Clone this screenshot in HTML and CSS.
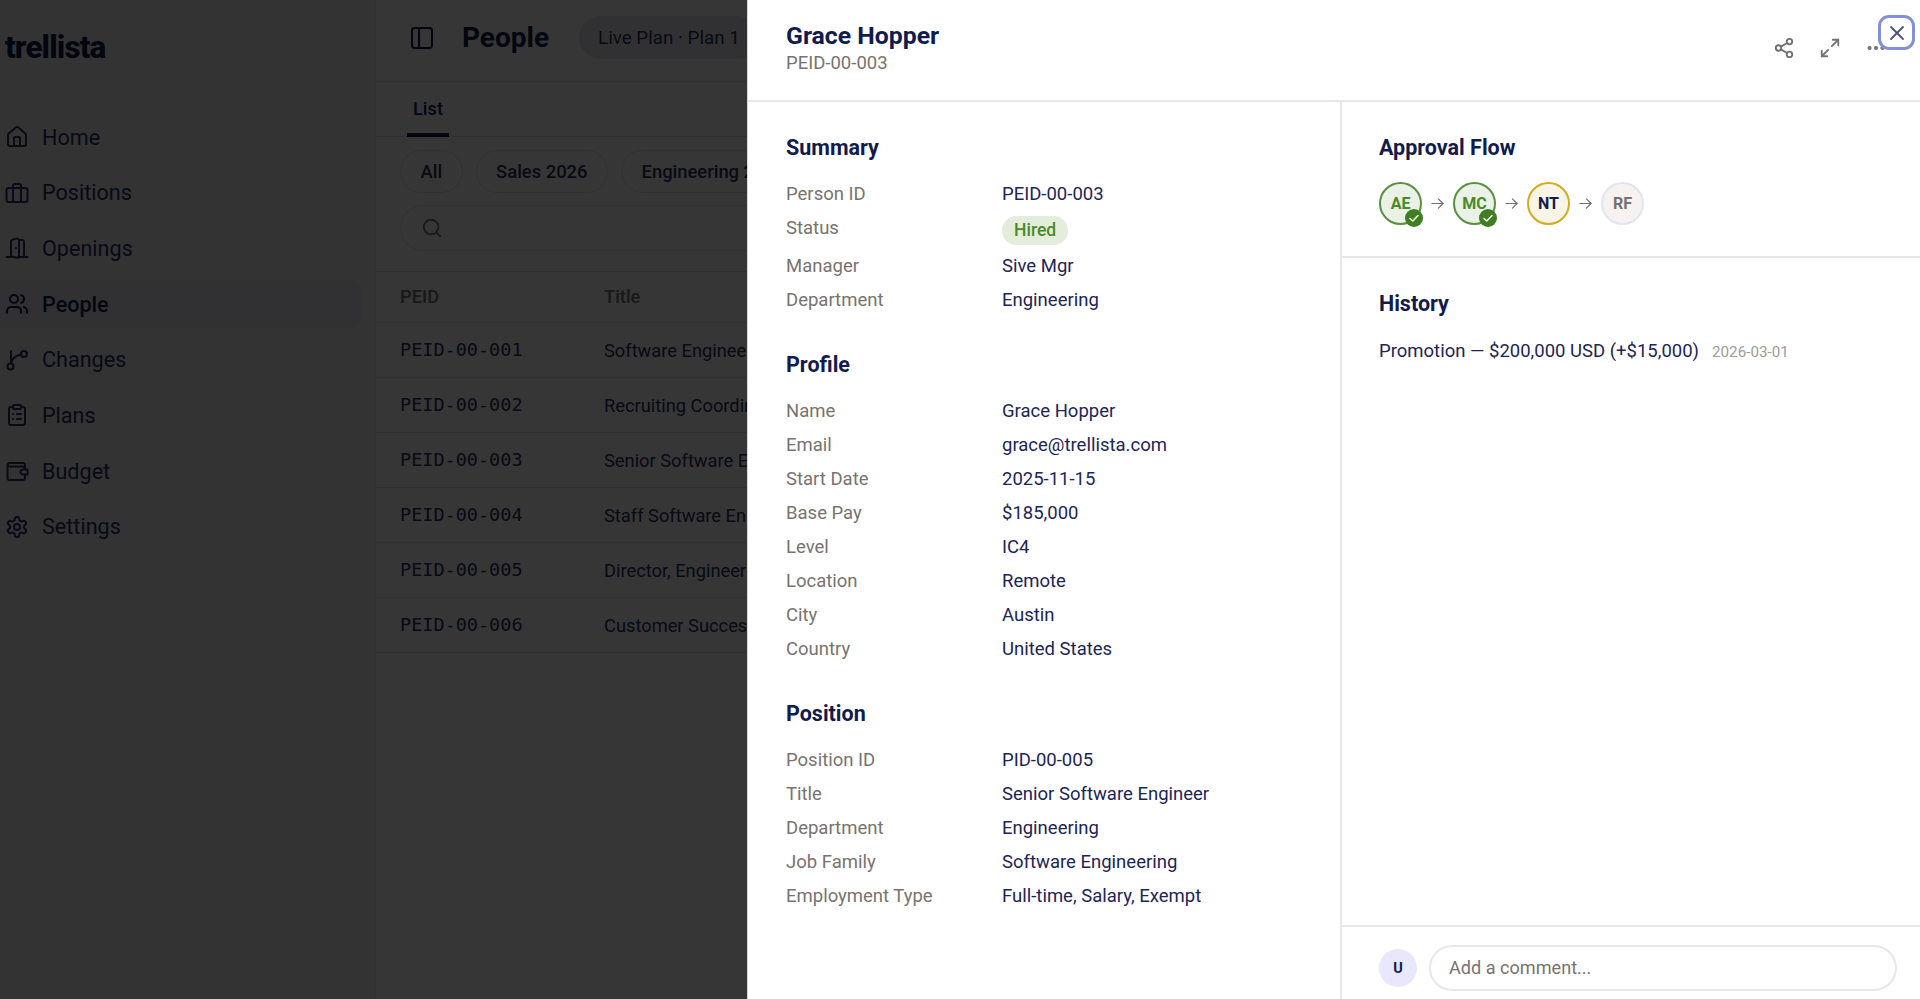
FILE: index.html
```html
<!DOCTYPE html>
<html lang="en">

<head>
    <meta charset="UTF-8">
    <meta name="viewport" content="width=device-width, initial-scale=1.0">
    <title>People</title>
    <link rel="stylesheet" href="styles.css">
</head>

<body>
    <div class="app">
        <aside class="sidebar">
            <div class="logo">trellista</div>
            <nav class="nav">
                <a class="nav-item">
                    <svg class="icon" viewBox="0 0 24 24"><path d="M15 21v-8a1 1 0 0 0-1-1h-4a1 1 0 0 0-1 1v8"/><path d="M3 10a2 2 0 0 1 .7-1.5l7-6a2 2 0 0 1 2.6 0l7 6a2 2 0 0 1 .7 1.5v9a2 2 0 0 1-2 2H5a2 2 0 0 1-2-2z"/></svg>
                    Home
                </a>
                <a class="nav-item">
                    <svg class="icon" viewBox="0 0 24 24"><path d="M16 21V5a2 2 0 0 0-2-2h-4a2 2 0 0 0-2 2v16"/><rect x="1.5" y="7" width="21" height="14" rx="2"/></svg>
                    Positions
                </a>
                <a class="nav-item">
                    <svg class="icon" viewBox="0 0 24 24"><path d="M14 4h3a2 2 0 0 1 2 2v14"/><path d="M1.5 21h4"/><path d="M14 21h8.5"/><path d="M11 12v.01"/><path d="M14 4.5v16.2a1 1 0 0 1-1.2 1L6 20.5V5.500a2 2 0 0 1 1.500-1.900l4-1A2 2 0 0 1 14 4.500Z"/></svg>
                    Openings
                </a>
                <a class="nav-item active">
                    <svg class="icon" viewBox="0 0 24 24"><path d="M16 21v-2a4 4 0 0 0-4-4H6a4 4 0 0 0-4 4v2"/><circle cx="9" cy="7" r="4"/><path d="M22 21v-2a4 4 0 0 0-3-3.87"/><path d="M16 3.13a4 4 0 0 1 0 7.75"/></svg>
                    People
                </a>
                <a class="nav-item">
                    <svg class="icon" viewBox="0 0 24 24"><path d="M6 15V3"/><circle cx="5.5" cy="18.5" r="3"/><circle cx="19" cy="6" r="3"/><path d="M6.5 14c1-3.5 4.5-6.5 9.5-7.5"/></svg>
                    Changes
                </a>
                <a class="nav-item">
                    <svg class="icon" viewBox="0 0 24 24"><rect x="8" y="2" width="8" height="4" rx="1"/><path d="M16 4h2a2 2 0 0 1 2 2v14a2 2 0 0 1-2 2H6a2 2 0 0 1-2-2V6a2 2 0 0 1 2-2h2"/><path d="M12 11h4"/><path d="M12 16h4"/><path d="M8 11h.01"/><path d="M8 16h.01"/></svg>
                    Plans
                </a>
                <a class="nav-item">
                    <svg class="icon" viewBox="0 0 24 24"><path d="M20 10V6a2 2 0 0 0-2-2H4.5a2 2 0 0 0-2 2v13a2 2 0 0 0 2 2H18a2 2 0 0 0 2-2v-3"/><path d="M2.5 6a2 2 0 0 0 2 1.5h13a2.5 2.5 0 0 1 2.5 2.5"/><path d="M22.5 10.5v5H18a2.500 2.500 0 0 1 0-5z"/></svg>
                    Budget
                </a>
                <a class="nav-item">
                    <svg class="icon" viewBox="0 0 24 24"><path d="M12.22 2h-.44a2 2 0 0 0-2 2v.18a2 2 0 0 1-1 1.73l-.43.25a2 2 0 0 1-2 0l-.15-.08a2 2 0 0 0-2.73.73l-.22.38a2 2 0 0 0 .73 2.73l.15.1a2 2 0 0 1 1 1.72v.51a2 2 0 0 1-1 1.74l-.15.09a2 2 0 0 0-.73 2.73l.22.38a2 2 0 0 0 2.73.73l.15-.08a2 2 0 0 1 2 0l.43.25a2 2 0 0 1 1 1.73V20a2 2 0 0 0 2 2h.44a2 2 0 0 0 2-2v-.18a2 2 0 0 1 1-1.73l.43-.25a2 2 0 0 1 2 0l.15.08a2 2 0 0 0 2.73-.73l.22-.39a2 2 0 0 0-.73-2.73l-.15-.08a2 2 0 0 1-1-1.74v-.5a2 2 0 0 1 1-1.74l.15-.09a2 2 0 0 0 .73-2.73l-.22-.38a2 2 0 0 0-2.73-.73l-.15.08a2 2 0 0 1-2 0l-.43-.25a2 2 0 0 1-1-1.73V4a2 2 0 0 0-2-2z"/><circle cx="12" cy="12" r="3"/></svg>
                    Settings
                </a>
            </nav>
        </aside>

        <main class="main">
            <header class="main-head">
                <svg class="icon" viewBox="0 0 24 24"><rect x="2" y="2" width="20" height="20" rx="2.5"/><path d="M9 2v20"/></svg>
                <h1 class="page-title">People</h1>
                <span class="plan-pill">Live Plan · Plan 1</span>
            </header>
            <div class="tabs">
                <span class="tab">List</span>
            </div>
            <div class="chips">
                <span class="chip">All</span>
                <span class="chip">Sales 2026</span>
                <span class="chip">Engineering 2</span>
            </div>
            <div class="search">
                <svg class="search-icon" viewBox="0 0 24 24"><circle cx="11" cy="11" r="8"/><path d="m21 21-4.3-4.3"/></svg>
            </div>
            <div class="table">
                <div class="tr th"><span class="col-id">PEID</span><span>Title</span></div>
                <div class="tr"><span class="col-id mono">PEID-00-001</span><span>Software Engineer</span></div>
                <div class="tr"><span class="col-id mono">PEID-00-002</span><span>Recruiting Coordin</span></div>
                <div class="tr"><span class="col-id mono">PEID-00-003</span><span>Senior Software En</span></div>
                <div class="tr"><span class="col-id mono">PEID-00-004</span><span>Staff Software Eng</span></div>
                <div class="tr"><span class="col-id mono">PEID-00-005</span><span>Director, Engineer</span></div>
                <div class="tr"><span class="col-id mono">PEID-00-006</span><span>Customer Success</span></div>
            </div>
        </main>
    </div>

    <div class="overlay"></div>

    <section class="drawer">
        <header class="drawer-head">
            <div>
                <h2 class="person-name">Grace Hopper</h2>
                <div class="person-id">PEID-00-003</div>
            </div>
            <div class="drawer-actions">
                <svg class="action" viewBox="0 0 24 24"><circle cx="18" cy="5" r="3"/><circle cx="6" cy="12" r="3"/><circle cx="18" cy="19" r="3"/><path d="M8.6 13.5l6.8 4"/><path d="M15.4 6.5l-6.8 4"/></svg>
                <svg class="action" viewBox="0 0 24 24"><path d="M14 10l7-7"/><path d="M15 3h6v6"/><path d="M10 14l-7 7"/><path d="M3 15v6h6"/></svg>
                <svg class="action" viewBox="0 0 24 24"><circle cx="5" cy="12" r="1.3"/><circle cx="12" cy="12" r="1.3"/><circle cx="19" cy="12" r="1.3"/></svg>
            </div>
            <button class="close-btn">
                <svg viewBox="0 0 24 24"><path d="M18 6 6 18"/><path d="m6 6 12 12"/></svg>
            </button>
        </header>

        <div class="drawer-body">
            <div class="details">
                <h3 class="section-title">Summary</h3>
                <dl class="fields">
                    <dt>Person ID</dt><dd>PEID-00-003</dd>
                    <dt>Status</dt><dd><span class="badge">Hired</span></dd>
                    <dt>Manager</dt><dd>Sive Mgr</dd>
                    <dt>Department</dt><dd>Engineering</dd>
                </dl>
                <h3 class="section-title">Profile</h3>
                <dl class="fields">
                    <dt>Name</dt><dd>Grace Hopper</dd>
                    <dt>Email</dt><dd>grace@trellista.com</dd>
                    <dt>Start Date</dt><dd>2025-11-15</dd>
                    <dt>Base Pay</dt><dd>$185,000</dd>
                    <dt>Level</dt><dd>IC4</dd>
                    <dt>Location</dt><dd>Remote</dd>
                    <dt>City</dt><dd>Austin</dd>
                    <dt>Country</dt><dd>United States</dd>
                </dl>
                <h3 class="section-title">Position</h3>
                <dl class="fields">
                    <dt>Position ID</dt><dd>PID-00-005</dd>
                    <dt>Title</dt><dd>Senior Software Engineer</dd>
                    <dt>Department</dt><dd>Engineering</dd>
                    <dt>Job Family</dt><dd>Software Engineering</dd>
                    <dt>Employment Type</dt><dd>Full-time, Salary, Exempt</dd>
                </dl>
            </div>

            <div class="side">
                <div class="approval">
                    <h3 class="section-title">Approval Flow</h3>
                    <div class="flow">
                        <span class="step done">AE<svg class="tick" viewBox="0 0 18 18"><path d="M5 9.5l2.8 2.5L13 6.5"/></svg></span>
                        <svg class="arrow" viewBox="0 0 14 14"><path d="M1 7h12"/><path d="M8 2l5 5-5 5"/></svg>
                        <span class="step done">MC<svg class="tick" viewBox="0 0 18 18"><path d="M5 9.5l2.8 2.5L13 6.5"/></svg></span>
                        <svg class="arrow" viewBox="0 0 14 14"><path d="M1 7h12"/><path d="M8 2l5 5-5 5"/></svg>
                        <span class="step current">NT</span>
                        <svg class="arrow" viewBox="0 0 14 14"><path d="M1 7h12"/><path d="M8 2l5 5-5 5"/></svg>
                        <span class="step waiting">RF</span>
                    </div>
                </div>
                <div class="history">
                    <h3 class="section-title">History</h3>
                    <div class="history-row">Promotion — $200,000 USD (+$15,000)<span class="history-date">2026-03-01</span></div>
                </div>
                <div class="comment-bar">
                    <span class="avatar">U</span>
                    <div class="comment-input">Add a comment...</div>
                </div>
            </div>
        </div>
    </section>
</body>

</html>
```

FILE: styles.css
```css
* {
    margin: 0;
    padding: 0;
    box-sizing: border-box;
}

html,
body {
    height: 100%;
    overflow: hidden;
}

body {
    font-family: Roboto, "Liberation Sans", sans-serif;
    color: #111b4d;
    background: #fff;
}

.app {
    display: flex;
    height: 100%;
}

svg {
    fill: none;
    stroke: currentColor;
    stroke-width: 2;
    stroke-linecap: round;
    stroke-linejoin: round;
    flex-shrink: 0;
}

.icon {
    width: 24px;
    height: 24px;
}

/* sidebar */
.sidebar {
    width: 376px;
    flex-shrink: 0;
    background: #eeeef6;
    border-right: 1px solid #e4e4ee;
}

.logo {
    padding: 30px 0 0 5px;
    height: 113px;
    font-size: 31.5px;
    line-height: 36px;
    font-weight: 800;
    letter-spacing: -0.9px;
    color: #111b4d;
}

.nav {
    display: flex;
    flex-direction: column;
    gap: 7.7px;
    padding-right: 13px;
}

.nav-item {
    display: flex;
    align-items: center;
    gap: 13px;
    height: 48px;
    padding-left: 5px;
    border-radius: 0 10px 10px 0;
    font-size: 21.6px;
    color: #2a3060;
}

.nav-item.active {
    background: #e5e5f2;
    color: #111b4d;
    font-weight: 500;
}

/* list page under the drawer */
.main {
    flex: 1;
    min-width: 0;
    background: #fff;
}

.main-head {
    display: flex;
    align-items: center;
    height: 82px;
    padding: 0 0 6px 34px;
    border-bottom: 1px solid #e4e4ee;
    white-space: nowrap;
}

.page-title {
    margin-left: 28px;
    font-size: 28px;
    font-weight: 700;
}

.plan-pill {
    display: flex;
    align-items: center;
    height: 43px;
    margin-left: 30px;
    padding: 0 19px;
    border-radius: 22px;
    background: #e8e8f2;
    font-size: 18.8px;
    color: #2a3060;
}

.tabs {
    display: flex;
    height: 55px;
    padding-left: 31px;
    border-bottom: 1px solid #e4e4ee;
}

.tab {
    height: 55px;
    padding: 16px 6px 0;
    border-bottom: 4px solid #111b4d;
    font-size: 18.3px;
    font-weight: 500;
}

.chips {
    display: flex;
    gap: 13px;
    padding: 13px 0 0 24px;
    white-space: nowrap;
}

.chip {
    display: flex;
    align-items: center;
    height: 43px;
    padding: 0 19.500px;
    border: 1px solid #e4e4ee;
    border-radius: 22px;
    font-size: 18.4px;
    font-weight: 500;
    color: #2a3060;
}

.search {
    display: flex;
    align-items: center;
    height: 46px;
    margin: 12px 0 20px 24px;
    padding-left: 20px;
    border: 1px solid #e4e4ee;
    border-radius: 23px;
}

.search-icon {
    width: 22px;
    height: 22px;
    color: #777;
}

.table {
    border-top: 1px solid #e4e4ee;
    white-space: nowrap;
}

.tr {
    display: flex;
    align-items: center;
    height: 55px;
    padding-left: 24px;
    border-bottom: 1px solid #e4e4ee;
    font-size: 18.3px;
    color: #2a3060;
}

.tr.th {
    height: 51px;
    padding-bottom: 2px;
    color: #757078;
    font-weight: 500;
}

.col-id {
    width: 204px;
    flex-shrink: 0;
}

.mono {
    margin-bottom: 2px;
    font-family: "DejaVu Sans Mono", "Liberation Mono", monospace;
    font-size: 18.5px;
}

.overlay {
    position: fixed;
    top: 0;
    left: 0;
    right: 0;
    bottom: 0;
    background: rgba(0, 0, 0, 0.79);
}

/* drawer */
.drawer {
    position: fixed;
    top: 0;
    right: 0;
    bottom: 0;
    width: 1173px;
    display: flex;
    flex-direction: column;
    background: #fff;
    border-left: 1px solid #d8d8e4;
}

.drawer-head {
    display: flex;
    justify-content: space-between;
    height: 102px;
    flex-shrink: 0;
    padding: 20px 22px 0 38px;
    border-bottom: 2px solid #e6e6ef;
}

.person-name {
    font-size: 24.8px;
    line-height: 32px;
    font-weight: 700;
    color: #111b4d;
}

.person-id {
    font-size: 18.5px;
    line-height: 22px;
    color: #787370;
}

.drawer-actions {
    display: flex;
    gap: 24px;
    padding-top: 17px;
    height: 39px;
    margin-right: 11px;
    color: #757070;
}

.action {
    width: 22px;
    height: 22px;
}

.close-btn {
    position: absolute;
    top: 15px;
    right: 5px;
    display: flex;
    align-items: center;
    justify-content: center;
    width: 37px;
    height: 35px;
    border: 3px solid #8391d4;
    border-radius: 11px;
    background: #fff;
    color: #4d5278;
}

.close-btn svg {
    width: 24px;
    height: 24px;
    stroke-width: 1.8;
}

.drawer-body {
    display: flex;
    flex: 1;
    min-height: 0;
}

.details {
    width: 594px;
    flex-shrink: 0;
    padding: 32px 38px;
    border-right: 2px solid #e6e6ef;
}

.section-title {
    font-size: 21.5px;
    line-height: 28px;
    font-weight: 700;
    color: #111b4d;
}

.fields {
    display: grid;
    grid-template-columns: 216px 1fr;
    margin: 15px 0 34px;
    font-size: 18.5px;
    line-height: 34px;
}

.fields dt {
    color: #787370;
}

.fields dd {
    color: #1c2558;
}

.badge {
    display: inline-block;
    height: 29px;
    margin: 5px 0 4px;
    padding: 0 12px;
    border-radius: 15px;
    background: #e4ecdc;
    color: #4a8a2a;
    font-size: 17.5px;
    font-weight: 500;
    line-height: 29px;
    vertical-align: top;
}

.side {
    flex: 1;
    min-width: 0;
    display: flex;
    flex-direction: column;
}

.approval {
    height: 156px;
    padding: 32px 37px 0;
    border-bottom: 2px solid #e6e6ef;
}

.flow {
    display: flex;
    align-items: center;
    gap: 9px;
    margin-top: 20px;
}

.step {
    position: relative;
    display: flex;
    align-items: center;
    justify-content: center;
    width: 43px;
    height: 43px;
    border: 2px solid;
    border-radius: 50%;
    font-size: 16px;
    font-weight: 700;
}

.step.done {
    border-color: #5a9040;
    background: #eaf1e6;
    color: #4a8a2a;
}

.step.current {
    border-color: #d4ac20;
    background: #f8f5e6;
    color: #111b4d;
}

.step.waiting {
    border-color: #e4e4ee;
    background: #f5f2f0;
    color: #757070;
}

.tick {
    position: absolute;
    right: -3px;
    bottom: -4px;
    width: 18px;
    height: 18px;
    border-radius: 50%;
    background: #3f7f22;
    color: #fff;
    stroke-width: 1.5;
}

.arrow {
    width: 13px;
    height: 13px;
    color: #757070;
    stroke-width: 1.3;
}

.history {
    flex: 1;
    padding: 32px 37px 0;
}

.history-row {
    margin-top: 16px;
    font-size: 18.5px;
    line-height: 34px;
    color: #1c2558;
}

.history-date {
    margin-left: 13px;
    font-size: 15.2px;
    color: #a09c9a;
}

.comment-bar {
    display: flex;
    align-items: center;
    gap: 12px;
    height: 74px;
    flex-shrink: 0;
    padding: 18px 23px 8px 37px;
    border-top: 2px solid #e6e6ef;
}

.avatar {
    display: flex;
    align-items: center;
    justify-content: center;
    width: 38px;
    height: 38px;
    flex-shrink: 0;
    border-radius: 50%;
    background: #e8e7fb;
    font-size: 14.5px;
    font-weight: 700;
}

.comment-input {
    flex: 1;
    height: 46px;
    padding-left: 18px;
    border: 2px solid #e6e6ef;
    border-radius: 23px;
    font-size: 18.1px;
    line-height: 42px;
    color: #787370;
}
```
